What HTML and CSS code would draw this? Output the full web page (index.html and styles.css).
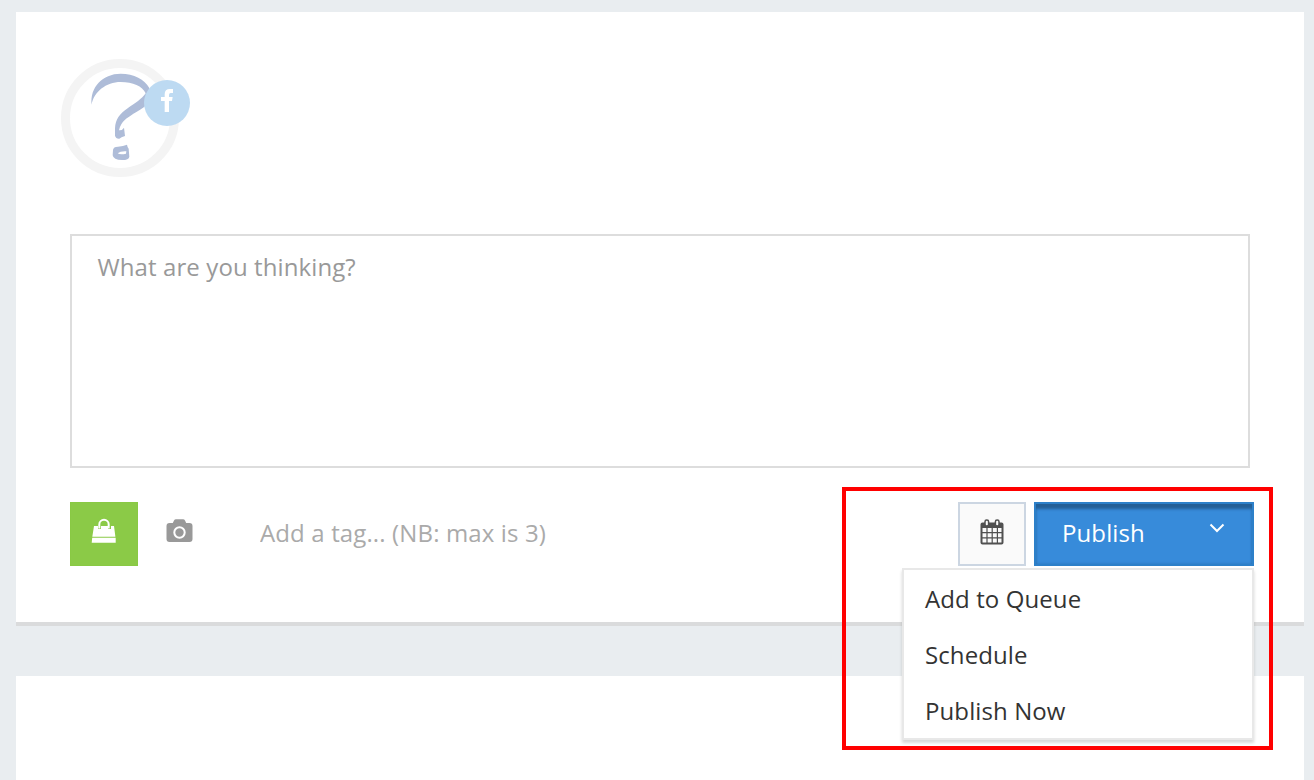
FILE: index.html
```html
<!DOCTYPE html>
<html lang="en">
<head>
<meta charset="utf-8">
<title>Publish</title>
<link rel="stylesheet" href="styles.css">
</head>
<body>
<main class="page">
  <section class="card composer">
    <svg class="avatar" viewBox="0 0 450 420" role="img" aria-label="Facebook account">
      <circle cx="210" cy="204" r="163.500" fill="none" stroke="#f4f4f4" stroke-width="27"/>
      <path fill="#aebcd8" d="M125 164C119 112 158 71 212 71C252 71 284 88 298 114V155C290 166 275 177 258 187C236 200 221 211 214 223Q209 231 207 241Q217 242 222 233L225 258Q213 261 208 266Q198 267 195 257V235C196 207 210 191 233 175C255 159 276 147 287 130C277 108 249 96 212 96C168 96 131 126 125 164Z"/>
      <path fill="#aebcd8" fill-rule="evenodd" d="M189 300Q190 290 204 290Q220 289 231 284Q232 291 236 296L238 320Q237 330 216 330Q190 330 188 316ZM203 310Q211 315 228 311L229 304Q211 303 203 310Z"/>
      <circle cx="351" cy="159" r="69" fill="#bddaf2"/>
      <path fill="#fff" d="M344 186V153H333V141H344V133Q344 117 360 117H369V129H362Q357 129 357 135V141H368L366 153H357V186Z"/>
    </svg>
    <textarea class="message" placeholder="What are you thinking?"></textarea>
    <div class="toolbar">
      <button class="shop" aria-label="Products">
        <svg width="26" height="26" viewBox="0 0 26 26"><path fill="#fff" d="M3 8H7V11H10V8H17V11H20V8H23L24.400 18.700H1.300ZM1.200 19.700H24.700V24.800H.7Z"/><path d="M8.300 10.500V6.500a4.700 4.700 0 0 1 9.400 0V10.500" fill="none" stroke="#fff" stroke-width="2"/></svg>
      </button>
      <button class="photo" aria-label="Add photo">
        <svg width="27" height="24" viewBox="0 0 27 24"><path fill="#999" d="M3.500 4H6.800L8 1.500Q8.600.3 10 .3H17Q18.400.3 19 1.500L20.200 4H23.500Q26.500 4 26.500 7V20Q26.500 23 23.500 23H3.500Q.5 23 .5 20V7Q.5 4 3.500 4Z"/><circle cx="13.500" cy="13.500" r="5.200" fill="none" stroke="#fff" stroke-width="2"/></svg>
      </button>
      <input class="tags" placeholder="Add a tag... (NB: max is 3)">
      <button class="calendar" aria-label="Calendar">
        <svg width="24" height="26" viewBox="0 0 24 26"><rect x="1.500" y="4.500" width="21" height="20" rx="1" fill="#fafafa" stroke="#505050" stroke-width="2"/><path fill="#505050" d="M1 4H23V9H1Z"/><path d="M7 9V24M12.200 9V24M17.400 9V24M2 13.700H22M2 18.800H22" fill="none" stroke="#505050" stroke-width="1.200"/><g fill="#fafafa" stroke="#505050" stroke-width="1.500"><rect x="5" y="1" width="3.600" height="6" rx="1.700"/><rect x="15.400" y="1" width="3.600" height="6" rx="1.700"/></g></svg>
      </button>
      <div class="publish-group">
        <button class="publish"><span class="publish-label">Publish</span><svg width="16" height="10" viewBox="0 0 16 10"><path d="M1.500 1.500L8 8L14.500 1.500" fill="none" stroke="#fff" stroke-width="2"/></svg></button>
        <ul class="menu">
          <li>Add to Queue</li>
          <li>Schedule</li>
          <li>Publish Now</li>
        </ul>
      </div>
    </div>
  </section>
  <section class="card"></section>
  <div class="highlight"></div>
</main>
</body>
</html>
```
FILE: styles.css
```css
* { box-sizing: border-box; }
body { margin: 0; background: #e9edf0; font-family: "Open Sans", sans-serif; font-size: 24px; letter-spacing: .1px; }
button, input, textarea { font: inherit; letter-spacing: inherit; border: 0; border-radius: 0; outline: 0; padding: 0; }
.page { position: relative; height: 780px; padding: 12px 10px 0 16px; display: flex; flex-direction: column; gap: 50px; overflow: hidden; }
.card { flex: 1; background: #fff; }
.composer { flex: 0 0 614px; padding: 38px 50px 0 54px; border-bottom: 4px solid #dadbdc; }
.avatar { display: block; width: 150px; height: 140px; margin-left: -20px; }
.message { display: block; width: 1180px; height: 234px; margin-top: 44px; padding: 14px 25.5px; border: 2px solid #ddd; line-height: 33px; resize: none; overflow: hidden; background: #fff; }
.message::placeholder { color: #999; opacity: 1; }
.toolbar { display: flex; height: 64px; margin-top: 34px; }
.shop { width: 68px; background: #8bca47; border: 1px solid #89c944; display: grid; place-items: center; padding-bottom: 6px; }
.photo { width: 82px; background: none; display: flex; align-items: flex-start; padding: 17px 0 0 28px; }
.tags { width: 600px; margin-left: 40px; height: 60px; background: none; letter-spacing: .13px; }
.tags::placeholder { color: #aaa; opacity: 1; }
.calendar { width: 68px; margin-left: auto; border: 2px solid #ccd6e2; background: #fafafa; display: grid; place-items: center; padding-bottom: 5px; }
.publish-group { position: relative; width: 220px; margin-left: 8px; }
.publish { width: 100%; height: 64px; padding: 0 27px 2px 26px; border: 2px solid #2d80c9; background: #378bda; color: #fff; display: flex; align-items: center; justify-content: space-between; box-shadow: inset 0 6px 3px -1px #245f96, inset 0 0 3px #2d75b8; }
.publish-label { padding-bottom: 2px; }
.publish svg { margin-bottom: 10px; }
.menu { position: absolute; top: 66px; right: 0; width: 352px; margin: 0; padding: 0; list-style: none; background: #fff; border: 2px solid #e8e8e8; box-shadow: 0 3px 3px rgba(0,0,0,.16); color: #333; }
.menu li { height: 56px; line-height: 58px; padding-left: 21px; }
.highlight { position: absolute; left: 842px; top: 487px; width: 431px; height: 263px; border: 4px solid #f00; pointer-events: none; }
```
